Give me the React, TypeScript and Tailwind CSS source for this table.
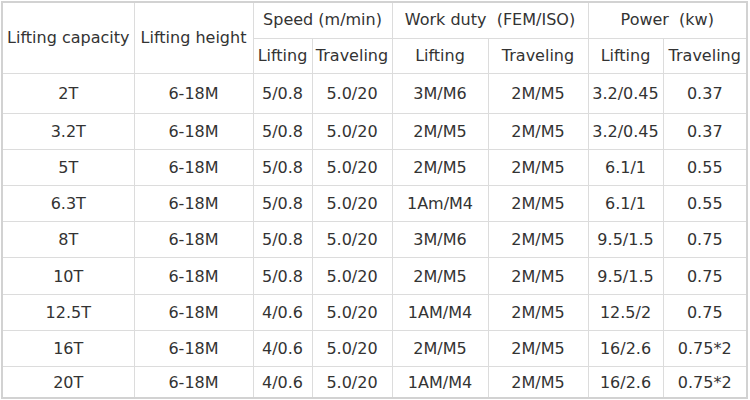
const rows = [
  ["2T", "6-18M", "5/0.8", "5.0/20", "3M/M6", "2M/M5", "3.2/0.45", "0.37"],
  ["3.2T", "6-18M", "5/0.8", "5.0/20", "2M/M5", "2M/M5", "3.2/0.45", "0.37"],
  ["5T", "6-18M", "5/0.8", "5.0/20", "2M/M5", "2M/M5", "6.1/1", "0.55"],
  ["6.3T", "6-18M", "5/0.8", "5.0/20", "1Am/M4", "2M/M5", "6.1/1", "0.55"],
  ["8T", "6-18M", "5/0.8", "5.0/20", "3M/M6", "2M/M5", "9.5/1.5", "0.75"],
  ["10T", "6-18M", "5/0.8", "5.0/20", "2M/M5", "2M/M5", "9.5/1.5", "0.75"],
  ["12.5T", "6-18M", "4/0.6", "5.0/20", "1AM/M4", "2M/M5", "12.5/2", "0.75"],
  ["16T", "6-18M", "4/0.6", "5.0/20", "2M/M5", "2M/M5", "16/2.6", "0.75*2"],
  ["20T", "6-18M", "4/0.6", "5.0/20", "1AM/M4", "2M/M5", "16/2.6", "0.75*2"],
];

const widths = [132, 119, 59, 80, 96, 100, 75, 84];
const heights = [40, 36, 36, 36, 36, 37, 36, 36, 32];

const cell = "border border-[#dcdcdc] text-center align-middle p-0 whitespace-nowrap";

const App = () => {
  return (
    <div className="w-[750px] h-[400px] bg-white pl-[1px] pt-[1px] font-['DejaVu_Sans',Verdana,sans-serif] text-[16px] text-[#333]">
      <table className="table-fixed border-collapse w-[747px] border-2 border-[#d2d2d2]">
        <colgroup>
          {widths.map((w, i) => (
            <col key={i} style={{ width: w }} />
          ))}
        </colgroup>
        <thead>
          <tr className="h-[36px]">
            <th rowSpan={2} className={`${cell} font-normal`}>Lifting capacity</th>
            <th rowSpan={2} className={`${cell} font-normal`}>Lifting height</th>
            <th colSpan={2} className={`${cell} font-normal`}>Speed (m/min)</th>
            <th colSpan={2} className={`${cell} font-normal`}>Work duty&nbsp;&nbsp;(FEM/ISO)</th>
            <th colSpan={2} className={`${cell} font-normal`}>Power&nbsp;&nbsp;(kw)</th>
          </tr>
          <tr className="h-[35px]">
            <th className={`${cell} font-normal`}>Lifting</th>
            <th className={`${cell} font-normal`}>Traveling</th>
            <th className={`${cell} font-normal`}>Lifting</th>
            <th className={`${cell} font-normal`}>Traveling</th>
            <th className={`${cell} font-normal`}>Lifting</th>
            <th className={`${cell} font-normal`}>Traveling</th>
          </tr>
        </thead>
        <tbody>
          {rows.map((r, i) => (
            <tr key={i} style={{ height: heights[i] }}>
              {r.map((c, j) => (
                <td key={j} className={`${cell} pt-[2px]`}>{c}</td>
              ))}
            </tr>
          ))}
        </tbody>
      </table>
    </div>
  );
};

export default App;
